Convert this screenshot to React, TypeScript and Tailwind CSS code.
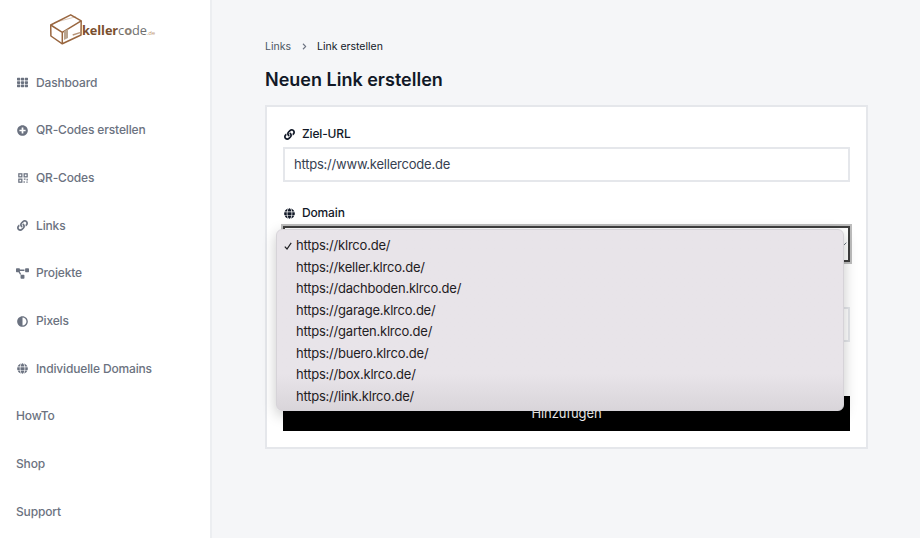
import { FaAdjust, FaChevronRight, FaGlobe, FaLink, FaPlusCircle, FaProjectDiagram, FaTh } from "react-icons/fa";
import type { ReactNode } from "react";

function QrIcon() {
  return (
    <svg viewBox="0 0 12 12" className="w-[10px] h-[10px] ml-[1px]" fill="none" stroke="currentColor" strokeWidth="1.5">
      <rect x="1" y="1" width="3.6" height="3.6" />
      <rect x="7.4" y="1" width="3.6" height="3.6" />
      <rect x="1" y="7.4" width="3.6" height="3.6" />
      <path d="M7 7.4h2M11 7v2M7.4 10v1.6M10 11h1.6" />
    </svg>
  );
}

// box + wordmark from the header
function Logo() {
  return (
    <div className="h-[46px] flex items-center pl-[50px]">
      <svg viewBox="50 14 32 31" className="w-[32px] h-[31px]" fill="none" stroke="#99663f" strokeWidth="1.5" strokeLinejoin="round">
        <path d="M50.7 25 L70.7 14.8 L81.2 20.8 L81 35 L62.3 43.8 L50.9 36 Z" />
        <path d="M50.7 25 L62.3 32.3 L81.2 20.8 M62.3 32.3 L62.3 43.8" />
        <path d="M54 22.7 L76 16.7" strokeWidth="0.6" opacity="0.6" />
        <path d="M64 31 L68 29 L68 38 L64 40 Z" fill="#b9a48f" stroke="none" />
        <path d="M72.7 35 L80 32.7" strokeWidth="1.4" opacity="0.7" />
      </svg>
      <span className="text-[12.8px] leading-none font-['Open_Sans',sans-serif] mt-[3px] tracking-[-0.1px]">
        <span className="font-bold text-[#7a4f2e]">keller</span>
        <span className="text-[#6f6f6f]">c</span>
        <span className="text-[#8a7f74] font-bold">o</span>
        <span className="text-[#6f6f6f]">de</span>
        <span className="text-[6px] text-[#c09a78]">.de</span>
      </span>
    </div>
  );
}

function NavItem({ icon, label }: { icon?: ReactNode; label: string }) {
  return (
    <a className="h-[47.7px] flex items-center pl-[16px] text-[#6b7280] text-[12px] tracking-[-0.15px] font-medium">
      {icon && <span className="w-[20px] flex items-center pl-[1px] text-[#6b7280]">{icon}</span>}
      {label}
    </a>
  );
}

function FieldLabel({ icon, label }: { icon: ReactNode; label: string }) {
  return (
    <div className="h-[14px] flex items-center text-[#111827] text-[12px] tracking-[-0.15px] font-medium">
      <span className="w-[19px] flex items-center pl-[1px]">{icon}</span>
      {label}
    </div>
  );
}

const domains = [
  "https://klrco.de/",
  "https://keller.klrco.de/",
  "https://dachboden.klrco.de/",
  "https://garage.klrco.de/",
  "https://garten.klrco.de/",
  "https://buero.klrco.de/",
  "https://box.klrco.de/",
  "https://link.klrco.de/",
];

export default function App() {
  return (
    <div className="w-[920px] h-[538px] overflow-hidden flex bg-[#f5f6f8] font-['Inter',sans-serif]">
      {/* Sidebar */}
      <aside className="w-[212px] shrink-0 bg-white border-r-2 border-[#eceef1] pt-[6px]">
        <Logo />
        <nav className="mt-[6.8px]">
          <NavItem icon={<FaTh size={11} />} label="Dashboard" />
          <NavItem icon={<FaPlusCircle size={11} />} label="QR-Codes erstellen" />
          <NavItem icon={<QrIcon />} label="QR-Codes" />
          <NavItem icon={<FaLink size={11} />} label="Links" />
          <NavItem icon={<FaProjectDiagram size={13} className="-ml-[1px]" />} label="Projekte" />
          <NavItem icon={<FaAdjust size={11} />} label="Pixels" />
          <NavItem icon={<FaGlobe size={11} />} label="Individuelle Domains" />
          <NavItem label="HowTo" />
          <NavItem label="Shop" />
          <NavItem label="Support" />
        </nav>
      </aside>

      {/* Main */}
      <main className="flex-1 pl-[53px] pt-[40px]">
        <div className="flex items-center h-[13px] text-[10.5px] font-normal text-[#4b5563]">
          <span>Links</span>
          <FaChevronRight size={7} className="ml-[10px] mr-[9px] text-[#6b7280]" />
          <span className="text-[#111827]">Link erstellen</span>
        </div>
        <h1 className="mt-[14px] h-[26px] leading-[26px] text-[18px] font-semibold text-[#111827]">
          Neuen Link erstellen
        </h1>

        <div className="relative mt-[12px] w-[603px] h-[344px] bg-white border-2 border-[#e5e7eb] px-[16px] pt-[20px]">
          <FieldLabel icon={<FaLink size={11} />} label="Ziel-URL" />
          <div className="mt-[6px] h-[35px] border-2 border-[#e5e7eb] pl-[9px] pt-[1px] flex items-center text-[13px] tracking-[-0.22px] text-[#374151]">
            https://www.kellercode.de
          </div>

          <div className="mt-[24px]">
            <FieldLabel icon={<FaGlobe size={11} />} label="Domain" />
          </div>
          <div className="mt-[6px] h-[36px] border-2 border-[#3f3f3f] outline-2 outline-[#bdbdbd] flex items-center justify-end pr-[1px]">
            <svg viewBox="0 0 6 6" className="w-[4px] h-[4px]" fill="none" stroke="#4b5563" strokeWidth="1.2">
              <path d="M1 5 L5 1" />
            </svg>
          </div>

          {/* field hidden behind the open menu */}
          <div className="mt-[45px] h-[35px] border-2 border-[#e5e7eb]" />

          <button className="mt-[54px] w-full h-[35px] bg-black text-white text-[13px] tracking-[-0.1px] pt-[1px] flex items-center justify-center">
            Hinzufügen
          </button>

          {/* native select menu */}
          <ul className="absolute left-[9px] top-[122px] w-[568px] h-[182px] py-[5px] rounded-[6px] border border-[#d6d3d8] bg-gradient-to-b from-[#e8e4e9] from-80% to-[#d9d5da] shadow-[0_4px_14px_rgba(0,0,0,0.22)] text-[13px] tracking-[-0.22px] text-[#1f2023]">
            {domains.map((d, i) => (
              <li key={d} className="h-[21.5px] flex items-center pl-[19px] relative">
                {i === 0 && (
                  <svg viewBox="0 0 8 8" className="absolute left-[7px] top-[7px] w-[8px] h-[8px]" fill="none" stroke="#1f2023" strokeWidth="1.2">
                    <path d="M0.8 4.6 L3 7 L7.2 0.8" />
                  </svg>
                )}
                {d}
              </li>
            ))}
          </ul>
        </div>
      </main>
    </div>
  );
}
